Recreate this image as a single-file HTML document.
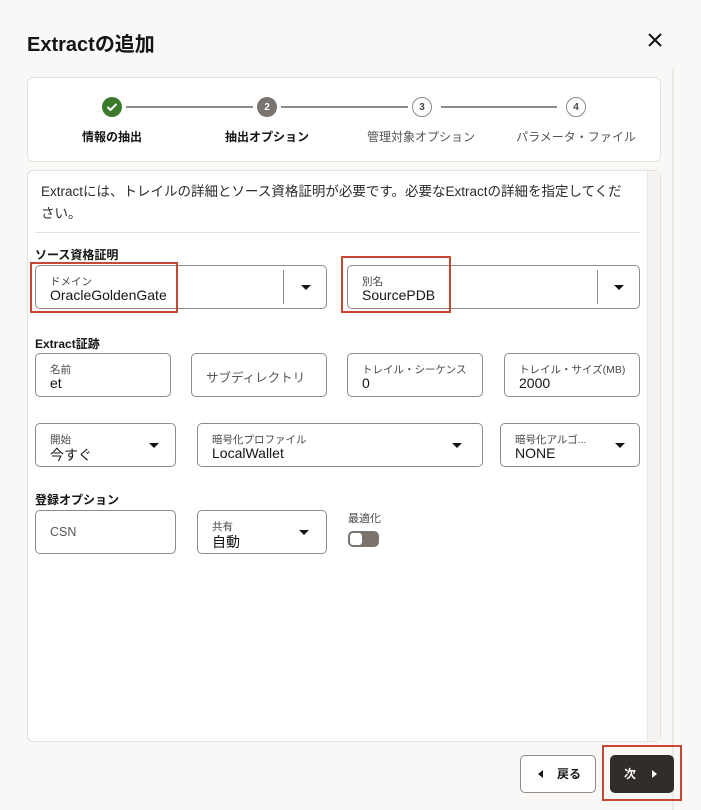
<!DOCTYPE html>
<html><head><meta charset="utf-8"><style>
*{box-sizing:border-box;margin:0;padding:0}
body{width:701px;height:810px;background:#f9f8f6;font-family:"Liberation Sans","Noto Sans CJK JP",sans-serif;color:#161513;position:relative;overflow:hidden}
.a{position:absolute}
.card{position:absolute;background:#fff;border:1px solid #e4e1dc;border-radius:6px}
.f{position:absolute;border:1px solid #8f8b85;border-radius:5px;background:#fff}
.lb{position:absolute;left:14px;top:8px;font-size:10.5px;color:#4a4744}
.v{position:absolute;left:14px;top:21px;font-size:14px;color:#161513}
.ph{position:absolute;left:14px;top:13px;font-size:12.5px;color:#555}
.ar{position:absolute;width:0;height:0;border-left:5px solid transparent;border-right:5px solid transparent;border-top:5px solid #161513}
.red{position:absolute;border:2px solid #c74634}
.h{position:absolute;font-size:12px;font-weight:bold}
.c{position:absolute;width:20px;height:20px;border-radius:50%;font-size:10px;font-weight:bold;display:flex;align-items:center;justify-content:center}
.st{position:absolute;top:128px;font-size:12px;width:160px;text-align:center}
.ln{position:absolute;top:106px;height:2px;background:#8f8b85}
</style></head><body>
<div class="a" style="left:27px;top:28px;font-size:20px;font-weight:bold">Extractの追加</div>
<svg class="a" style="left:648px;top:33px" width="14" height="14"><path d="M1 1L13 13M13 1L1 13" stroke="#161513" stroke-width="2"/></svg>
<div class="a" style="left:672px;top:68px;width:2px;height:742px;background:#ebe9e5"></div>

<div class="card" style="left:27px;top:77px;width:634px;height:85px"></div>
<div class="ln" style="left:126px;width:127px"></div>
<div class="ln" style="left:281px;width:127px"></div>
<div class="ln" style="left:441px;width:116px"></div>
<div class="c" style="left:102px;top:97px;background:#3b7a2a"><svg width="12" height="10"><path d="M1.5 5l3 3 6-6" stroke="#fff" stroke-width="2" fill="none"/></svg></div>
<div class="c" style="left:257px;top:97px;background:#7a736e;color:#fff">2</div>
<div class="c" style="left:412px;top:97px;border:1.5px solid #8f8b85;color:#4a4744">3</div>
<div class="c" style="left:566px;top:97px;border:1.5px solid #8f8b85;color:#4a4744">4</div>
<div class="st" style="left:32px;font-weight:bold">情報の抽出</div>
<div class="st" style="left:187px;font-weight:bold">抽出オプション</div>
<div class="st" style="left:341px;color:#555">管理対象オプション</div>
<div class="st" style="left:496px;color:#555">パラメータ・ファイル</div>

<div class="card" style="left:27px;top:170px;width:634px;height:572px"></div>
<div class="a" style="left:647px;top:171px;width:13px;height:570px;background:#f4f3f1;border-left:1px solid #ebe9e5"></div>
<div class="a" style="left:41px;top:181px;white-space:nowrap;font-size:13.5px;line-height:22px;color:#2d2b29">Extractには、トレイルの詳細とソース資格証明が必要です。必要なExtractの詳細を指定してくだ<br>さい。</div>
<div class="a" style="left:35px;top:232px;width:605px;height:1px;background:#e4e1dc"></div>

<div class="h" style="left:35px;top:246px">ソース資格証明</div>
<div class="f" style="left:35px;top:265px;width:292px;height:44px"><div class="lb">ドメイン</div><div class="v">OracleGoldenGate</div><div class="a" style="left:247px;top:4px;width:1px;height:34px;background:#8f8b85"></div><div class="ar" style="left:265px;top:19px"></div></div>
<div class="f" style="left:347px;top:265px;width:293px;height:44px"><div class="lb">別名</div><div class="v">SourcePDB</div><div class="a" style="left:249px;top:4px;width:1px;height:34px;background:#8f8b85"></div><div class="ar" style="left:266px;top:19px"></div></div>
<div class="red" style="left:30px;top:262px;width:148px;height:51px"></div>
<div class="red" style="left:341px;top:256px;width:110px;height:57px"></div>

<div class="h" style="left:35px;top:335px">Extract証跡</div>
<div class="f" style="left:35px;top:353px;width:136px;height:44px"><div class="lb">名前</div><div class="v">et</div></div>
<div class="f" style="left:191px;top:353px;width:136px;height:44px"><div class="ph">サブディレクトリ</div></div>
<div class="f" style="left:347px;top:353px;width:136px;height:44px"><div class="lb">トレイル・シーケンス</div><div class="v">0</div></div>
<div class="f" style="left:504px;top:353px;width:136px;height:44px"><div class="lb">トレイル・サイズ(MB)</div><div class="v">2000</div></div>

<div class="f" style="left:35px;top:423px;width:141px;height:44px"><div class="lb">開始</div><div class="v">今すぐ</div><div class="ar" style="left:113px;top:19px"></div></div>
<div class="f" style="left:197px;top:423px;width:286px;height:44px"><div class="lb">暗号化プロファイル</div><div class="v">LocalWallet</div><div class="ar" style="left:254px;top:19px"></div></div>
<div class="f" style="left:500px;top:423px;width:140px;height:44px"><div class="lb">暗号化アルゴ...</div><div class="v">NONE</div><div class="ar" style="left:114px;top:19px"></div></div>

<div class="h" style="left:35px;top:491px">登録オプション</div>
<div class="f" style="left:35px;top:510px;width:141px;height:44px"><div class="ph" style="top:14px">CSN</div></div>
<div class="f" style="left:197px;top:510px;width:130px;height:44px"><div class="lb">共有</div><div class="v">自動</div><div class="ar" style="left:101px;top:19px"></div></div>
<div class="a" style="left:348px;top:510px;font-size:11px;color:#4a4744">最適化</div>
<div class="a" style="left:348px;top:531px;width:31px;height:16px;border-radius:5px;background:#7a736e"><div class="a" style="left:2px;top:2px;width:12px;height:12px;border-radius:3px;background:#fff"></div></div>

<div class="a" style="left:520px;top:755px;width:76px;height:38px;border:1px solid #8f8b85;border-radius:5px;background:#fff;font-size:12px;font-weight:bold;line-height:36px"><div class="a" style="left:17px;top:14px;border-top:4px solid transparent;border-bottom:4px solid transparent;border-right:5px solid #161513"></div><span class="a" style="left:36px">戻る</span></div>
<div class="a" style="left:610px;top:755px;width:64px;height:38px;border-radius:5px;background:#312d2a;color:#fff;font-size:12px;font-weight:bold;line-height:38px"><span class="a" style="left:14px">次</span><div class="a" style="left:42px;top:15px;border-top:4px solid transparent;border-bottom:4px solid transparent;border-left:5px solid #fff"></div></div>
<div class="red" style="left:602px;top:745px;width:80px;height:56px"></div>
</body></html>
